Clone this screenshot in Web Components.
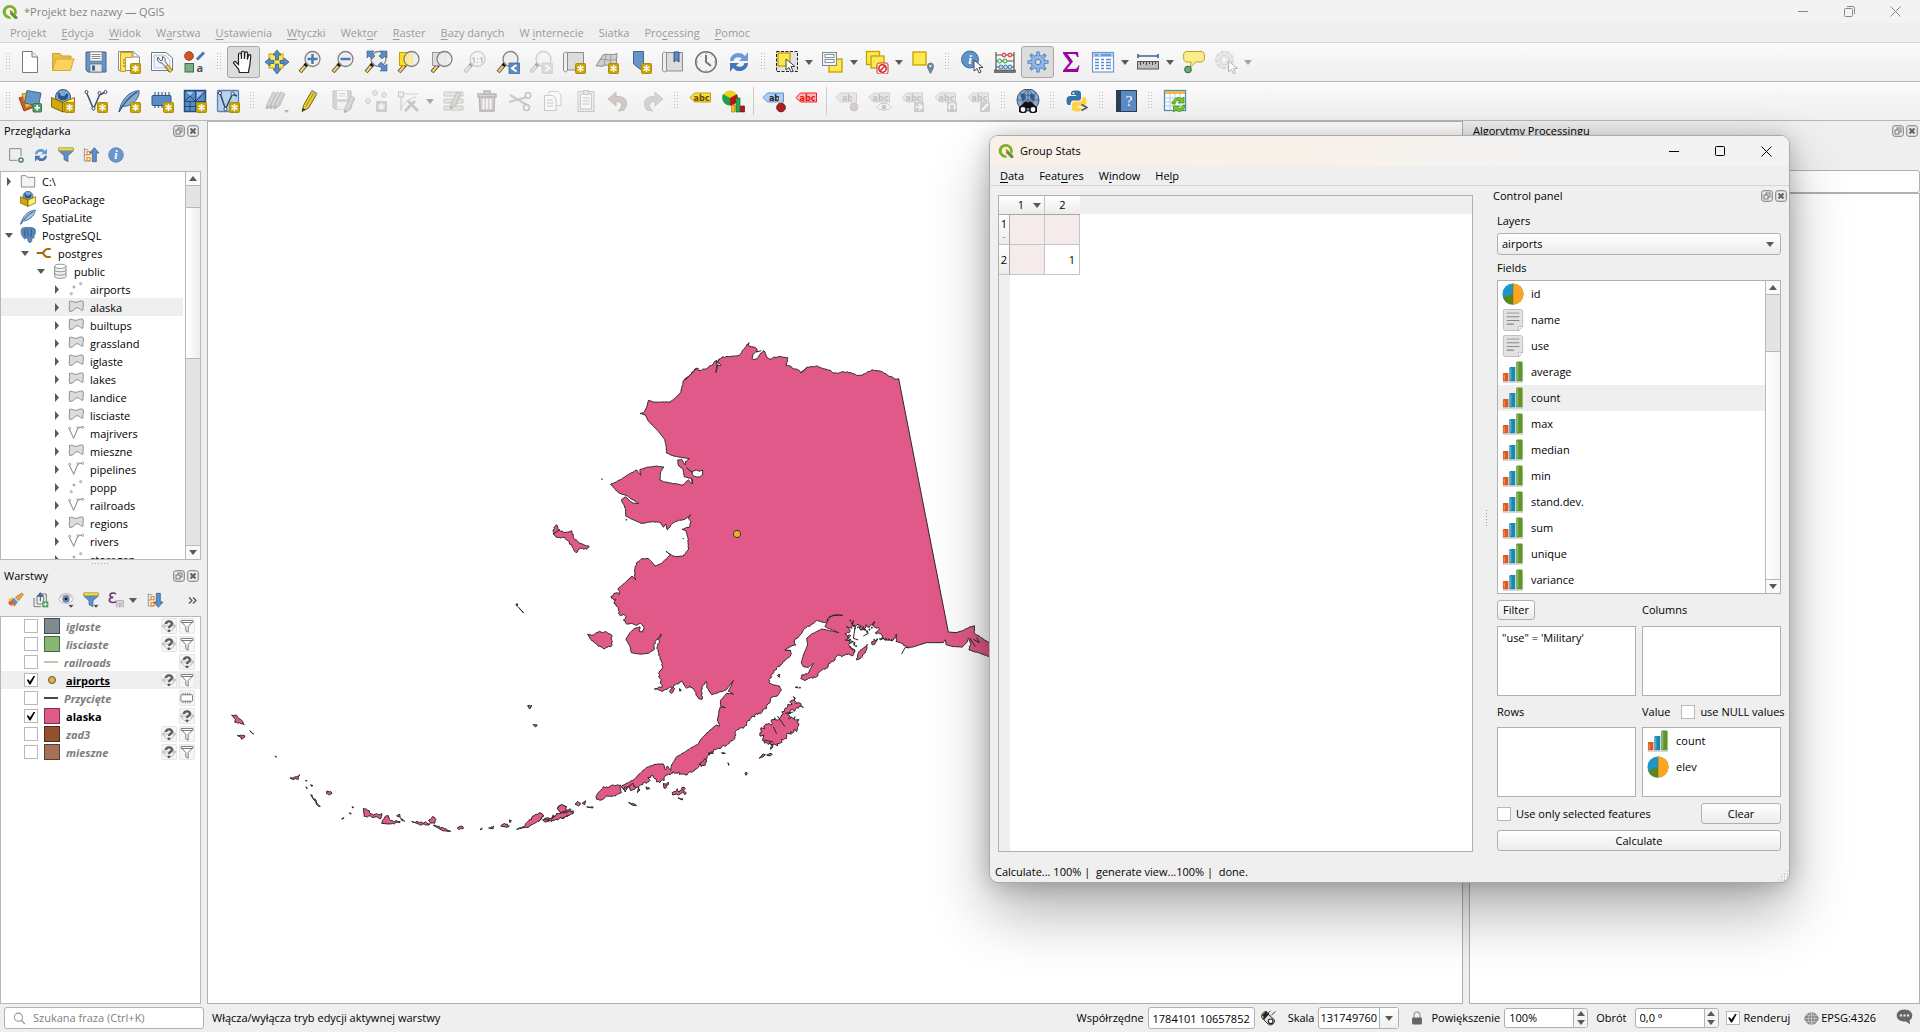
<!DOCTYPE html>
<html lang="pl">
<head>
<meta charset="utf-8">
<title>*Projekt bez nazwy — QGIS</title>
<style>
html, body { margin: 0; height: 100%; }
body { font: 11px/16px "Open Sans", "Noto Sans", sans-serif; color: #000; background: #efefef; overflow: hidden; }
</style>
</head>
<body>
<qgis-app></qgis-app>
<script>
/* ---------- icon drawings, all on a 24 x 24 grid ---------- */
const badge = (x = 13, y = 13) => `<g transform="translate(${x} ${y})"><rect x=".5" y=".5" width="10" height="10" rx="1" fill="#c9a50c" stroke="#b08e00"/><path d="M5.500 2v7M2.500 3.700l6 3.600M8.500 3.700l-6 3.600" stroke="#fff" stroke-width="1.500"/></g>`;
const lens = `<path d="M9 14 2 22" stroke="#555" stroke-width="4"/><path d="M8.500 14.500 2.500 21.500" stroke="#ffd35c" stroke-width="2"/><path d="M9.500 12.500 7 16" stroke="#111" stroke-width="3.500"/>`;
const glass = `<circle cx="14.500" cy="9" r="7.500" fill="#ededed" fill-opacity=".85" stroke="#848484" stroke-width="1.300"/>`;
const label = (f, s, t, x = 'abc') => `<path d="M1 8.500 5.500 4H21.500V13H5.500Z" fill="${f}" stroke="${s}"/><text x="12.500" y="11.500" font-size="8" font-weight="bold" text-anchor="middle" fill="${t}" font-family="DejaVu Sans, sans-serif">${x}</text>`;
const pencil = (x, y, c = '#e3c62a') => `<g transform="translate(${x} ${y})"><path d="M0 17 1 12 7 0 11 2 5.500 14Z" fill="${c}" stroke="#6b5a5a"/><path d="M0 17 .6 14 3 15.500Z" fill="#333"/><path d="M2.500 13 8.500 1" stroke="#fff" stroke-opacity=".5"/></g>`;
const arrows2 = (a, b) => `<path d="M3 11C3 5 9 1.500 15 3.500L18 6 21 2V11H12L15 8.200C11 6 7 7.500 6.500 11Z" fill="${a}"/><path d="M21 13C21 19 15 22.500 9 20.500L6 18 3 22V13H12L9 15.800C13 18 17 16.500 17.500 13Z" fill="${b}"/>`;
const cursor = (x, y) => `<path transform="translate(${x} ${y})" d="M0 0V11L3 8.500 5 13 7 12 5 7.500H9Z" fill="#fff" stroke="#444"/>`;
const sq = (x, y, w, h) => `<rect x="${x}" y="${y}" width="${w}" height="${h}" fill="#fce94f" stroke="#c4a000" stroke-width="1.300"/>`;
const menuTick = `<path d="M15 19H24L19.500 24Z" fill="#444" stroke="#efefef" stroke-width=".8"/>`;
const I = {
 logo: `<path d="M12 1.500A10.300 10.300 0 1 0 14 21.700L11.500 18.200A6.300 6.300 0 1 1 18 13.500L21 16.500A10.300 10.300 0 0 0 12 1.500Z" fill="#7eb02c"/><path d="M12 11.500V15L19.500 22.500H23V19L15.500 11.500Z" fill="#589632"/><path d="M11 8.500 16 11 13 15Z" fill="#ee7913"/>`,
 newfile: `<path d="M4.500 1.500H14L19.500 7V22.500H4.500Z" fill="#fff" stroke="#7a7a7a"/><path d="M14 1.500V7H19.500" fill="#eee" stroke="#7a7a7a"/>`,
 open: `<path d="M1.500 20V3.500H9L11 6H20V9" fill="#e8bd4a" stroke="#cfa02e"/><path d="M1.500 20.500 5 9H23L19.500 20.500Z" fill="#fbd35a" stroke="#d9a92f"/>`,
 save: `<path d="M2 2H22V22H4L2 20Z" fill="#6895c8" stroke="#41658f"/><rect x="6" y="2" width="12" height="9" fill="#fff" stroke="#777" stroke-width=".7"/><path d="M7.500 4.500h9M7.500 6.500h9M7.500 8.500h9" stroke="#888"/><rect x="6" y="14" width="12" height="8" fill="#e4e4e4" stroke="#55708f" stroke-width=".7"/><rect x="8" y="15.500" width="3" height="5" fill="#41658f"/>`,
 layoutnew: `<path d="M1.500 1.500H16L22.500 7V20.500H1.500Z" fill="#fff" stroke="#888"/><path d="M16 1.500V7H22" fill="none" stroke="#888"/><path d="M3.500 2.500H15V7.500H8.500V21.500H3.500Z" fill="#fbe06b" stroke="#c9a012"/><path d="M6 10h2M6 13h2M6 16h2" stroke="#8a6d00"/>${badge()}`,
 layoutmgr: `<path d="M1.500 2.500H16L22.500 8V20.500H1.500Z" fill="#fff" stroke="#777"/><path d="M4 5H15L20 10V18H4Z" fill="#eef5ff" stroke="#a8c5ea"/><path d="M8 7a4 4 0 0 0 4 6l7 9 3-2-7-8.500a4 4 0 0 0-2.500-5V10L11 11 9 9Z" fill="#eee" stroke="#666"/><path d="M15.500 16 20 22.500 22.500 20.500 18 14.500Z" fill="#e8c64a" stroke="#806818" stroke-width=".6"/>`,
 style: `<circle cx="6" cy="6" r="4.300" fill="#d3562b" stroke="#9c3c19"/><path d="M14 9.500 21 2.500" stroke="#4a77b4" stroke-width="3"/><rect x="2" y="13.500" width="8.500" height="8.500" fill="#7cae84" stroke="#3d6f45"/><text x="13.500" y="22" font-size="11" font-weight="bold" fill="#555" font-family="Open Sans, sans-serif">a</text>`,
 hand: `<path d="M7.500 22.500 6.500 19 1.800 13.500C.8 12 2.800 10.800 4 12L6.500 14.500V4.500C6.500 2.500 9 2.500 9.200 4.500L9.500 9V2.500C9.500.8 12.300.8 12.400 2.500V9L13 3C13 1.300 15.600 1.500 15.600 3.200L15.300 9.500 16.500 5.500C17 4 19 4.500 18.800 6.200L18 13.500C18 17 16.500 18.500 16.500 22.500Z" fill="#fff" stroke="#222" stroke-width="1.200"/>`,
 pansel: `<rect x="4" y="4" width="14" height="14" fill="#fce94f" stroke="#c4a000"/><path d="M12 0 16 5H13.500V10H10.500V5H8ZM12 24 16 19H13.500V14H10.500V19H8ZM0 12 5 8V10.500H9V13.500H5V16ZM24 12 19 8V10.500H15V13.500H19V16Z" fill="#5b8bc4" stroke="#345d8d" stroke-width=".8"/>`,
 zin: `${lens}${glass}<path d="M14.500 4V14M9.500 9H19.500" stroke="#4a7ab8" stroke-width="2.500"/>`,
 zout: `${lens}${glass}<path d="M9.500 9H19.500" stroke="#4a7ab8" stroke-width="2.500"/>`,
 zfull: `${lens}${glass}<path d="M3 1H10L8 3 11 6 8 9 5 6 3 8ZM23 1H16L18 3 15 6 18 9 21 6 23 8ZM23 21H16L18 19 14 15 17 12 21 16 23 14Z" fill="#5b8bc4" stroke="#345d8d" stroke-width=".6"/>`,
 zsel: `${lens}<rect x="2.500" y="2.500" width="13" height="13" fill="#fce01a" stroke="#c4a000"/>${glass}<rect x="9" y="4" width="6" height="10" fill="#fbeb84" opacity=".8"/>`,
 zlay: `${lens}<rect x="2.500" y="2.500" width="13" height="13" fill="#ddd" stroke="#999"/>${glass}`,
 z1: `${lens}${glass}<text x="14.500" y="12.500" font-size="9" font-weight="bold" text-anchor="middle" fill="#666" font-family="Open Sans, sans-serif">1:1</text>`,
 zprev: `${lens}${glass}<rect x="13" y="13" width="10.500" height="10.500" fill="#5b8bc4" stroke="#345d8d" stroke-width=".7"/><path d="M20.500 15 16 18.200 20.500 21.500" fill="none" stroke="#fff" stroke-width="2"/>`,
 znext: `${lens}${glass}<rect x="13" y="13" width="10.500" height="10.500" fill="#aaa" stroke="#888" stroke-width=".7"/><path d="M16 15 20.500 18.200 16 21.500" fill="none" stroke="#fff" stroke-width="2"/>`,
 newmap: `<path d="M5 2.500H21.500V20H5Z" fill="#dcdcdc" stroke="#8d8d8d"/><path d="M1.500 4C1.500 1.500 5.500 1.500 5.500 4V20C5.500 22.500 1.500 22.500 1.500 20Z" fill="#eee" stroke="#8d8d8d"/>${badge()}`,
 new3d: `<path d="M1 16 8 5C12 3 15 6 22 3.500L21 17C16 18 12 13 8 16 5 17 3 15 1 16Z" fill="#cfcfcf" stroke="#8a8a8a"/><path d="M5 10C10 8 14 12 21.500 9M11 4.500 9 15.500M16 5 15 15" fill="none" stroke="#8a8a8a" stroke-width=".7"/>${badge()}`,
 bmnew: `<path d="M5.500 1.500H15.500V21L10.500 18 5.500 14Z" fill="#6895c8" stroke="#3e6592"/>${badge()}`,
 bm: `<path d="M5 2.500H21.500V21H5Z" fill="#dcdcdc" stroke="#8d8d8d"/><path d="M1.500 4C1.500 1.500 5.500 1.500 5.500 4V20C5.500 22.500 1.500 22.500 1.500 20Z" fill="#eee" stroke="#8d8d8d"/><path d="M13 2H18V12L15.500 10 13 12Z" fill="#5b8bc4" stroke="#2d5280"/>`,
 clock: `<circle cx="12" cy="12" r="10.300" fill="#f4f4f4" stroke="#777" stroke-width="1.600"/><path d="M12 5V12L17 16" fill="none" stroke="#777" stroke-width="2"/><path d="M12 3v1M12 20v1M3 12h1M20 12h1M5.600 5.600l.7.7M18.400 5.600l-.7.7M5.600 18.400l.7-.7" stroke="#777"/>`,
 refresh: arrows2('#6b9bd6', '#4677b5'),
 select: `<path d="M1.500 1.500H22.500V21.500H1.500Z" fill="#e2e2e2" stroke="#222" stroke-dasharray="3 1.500"/>${sq(3, 3, 12, 13)}${cursor(11, 9)}`,
 selform: `${sq(9, 9, 13, 13)}<rect x="2.500" y="2.500" width="14" height="13" fill="#f3f3f3" stroke="#888"/><rect x="5" y="4.500" width="9" height="3" fill="#fff" stroke="#7c93ad"/><rect x="5" y="9.500" width="9" height="3" fill="#fff" stroke="#7c93ad"/>`,
 desel: `${sq(1.500, 1.500, 13, 13)}${sq(6, 6, 13, 12)}<rect x="12" y="13" width="11" height="11" rx="2" fill="#fff" stroke="#c33"/><circle cx="17.500" cy="18.500" r="3.700" fill="none" stroke="#d22" stroke-width="1.600"/><path d="M15 21 20 16" stroke="#d22" stroke-width="1.600"/>`,
 selloc: `${sq(2, 2, 13, 13)}<path d="M19.500 23.500C17 19 16.500 18 16.500 16a3 3 0 0 1 6 0C22.500 18 22 19 19.500 23.500Z" fill="#6d8aa0" stroke="#4d6b82" stroke-width=".7"/><circle cx="19.500" cy="16" r="1.100" fill="#fff"/>`,
 info: `<circle cx="10" cy="9.500" r="8.500" fill="#5f92c8" stroke="#3f6c9e"/><text x="10" y="14" font-size="13" font-weight="bold" font-style="italic" text-anchor="middle" fill="#fff" font-family="Liberation Serif, serif">i</text>${cursor(14, 10)}`,
 abacus: `<path d="M3 2V21M21 2V21M3 5H21M3 11H21M3 17H21" fill="none" stroke="#555" stroke-width="1.200"/><rect x="1.500" y="20" width="21" height="2.500" fill="#777" stroke="#444" stroke-width=".6"/><g stroke-width="1" fill="#fbb" stroke="#c33"><circle cx="11" cy="5" r="2"/><circle cx="17" cy="5" r="2"/></g><g fill="#cfc" stroke="#3a9a4a"><circle cx="6.500" cy="11" r="2"/><circle cx="12" cy="11" r="2"/></g><g fill="#bde" stroke="#3778a8"><circle cx="8" cy="17" r="2"/><circle cx="12.500" cy="17" r="2"/><circle cx="17" cy="17" r="2"/></g>`,
 gear: `<g stroke="#4d80bf"><path d="M12 1.500V22.500M1.500 12H22.500M4.500 4.500 19.500 19.500M19.500 4.500 4.500 19.500" stroke-width="3.400"/><circle cx="12" cy="12" r="7" fill="#8fb5e2"/><path d="M12 2.500V21.500M2.500 12H21.500M5.500 5.500 18.500 18.500M18.500 5.500 5.500 18.500" stroke="#8fb5e2" stroke-width="1.800"/><circle cx="12" cy="12" r="6" fill="#8fb5e2" stroke="none"/><circle cx="12" cy="12" r="2.700" fill="#dcdcdc"/></g>`,
 sigma: `<path d="M4 2H19L19.500 7H18C17.500 4.500 16.500 4 14 4H8.500L14 11.500 8 19H15C17.500 19 18.500 18 19.500 15.500H20.500L19 22H4V20.500L10.500 12.500 4 3.500Z" fill="#a300a3"/>`,
 table: `<rect x="1.500" y="2.500" width="21" height="19.500" fill="#fff" stroke="#6c99cf" stroke-width="1.200"/><path d="M2 3H22V7H2Z" fill="#a9c8ee"/><path d="M4 5h3M10 5h10M4 9.500h4M10 9.500h3M15 9.500h5M4 12.500h4M10 12.500h3M15 12.500h5M4 15.500h4M10 15.500h3M15 15.500h5M4 18.500h4M10 18.500h3M15 18.500h5" stroke="#5b8ccb" stroke-width="1.300"/>`,
 measure: `<path d="M2 6H22M2 4V8M22 4V8" stroke="#41658f" stroke-width="1.600"/><rect x="1.500" y="11.500" width="21" height="7.500" fill="#bdbdbd" stroke="#555"/><path d="M4.500 12v3M7.500 12v2M10.500 12v3M13.500 12v2M16.500 12v3M19.500 12v2" stroke="#444"/>`,
 tip: `<path d="M5 1.500H19C22 1.500 22.500 4 22.500 6.500S22 12 19 12H13.500L8 18 9 12H5C2 12 1.500 9.500 1.500 6.500S2 1.500 5 1.500Z" fill="#fbed8a" stroke="#bfa01a"/><circle cx="6" cy="19.500" r="3.400" fill="#6fa673" stroke="#3a6a3e"/>`,
 runact: `<circle cx="10.500" cy="10" r="8" fill="#eee" stroke="#aaa" stroke-width="3" stroke-dasharray="4.500 1"/><circle cx="10.500" cy="10" r="5" fill="#ccc" stroke="#888"/><path d="M9 7V13L13 10Z" fill="#fff"/>${cursor(14.500, 11)}`,
 dsm: `<path d="M1 9 10 6 16 18 6 22Z" fill="#d3562b" stroke="#9c3c19"/><path d="M4 5 13 3 17 15 8 19Z" fill="#f0c33a" stroke="#b08b10"/><path d="M9 1.500 23 4 20.500 17 6.500 14Z" fill="#6895c8" stroke="#3e6592"/><rect x="15" y="14.500" width="8.500" height="8.500" rx="1" fill="#5ba06a" stroke="#36714a"/><path d="M19.200 16v5.500M16.500 18.700h5.500" stroke="#fff" stroke-width="1.500"/>`,
 gpkgnew: `<circle cx="12" cy="8" r="7.500" fill="#7fa4cf" stroke="#33557e"/><path d="M7 3C10 4 9 8 12 7 15 8 14 3 17 5 18 9 15 12 12 11 8 12 6 8 7 3Z" fill="#2f5580"/><path d="M.5 8.500 12 13.500V23L.5 18Z" fill="#d3a800" stroke="#665200" stroke-width=".8"/><path d="M23.500 8.500 12 13.500V23L23.500 18Z" fill="#fff06a" stroke="#665200" stroke-width=".8"/>${badge()}`,
 shpnew: `<path d="M2.500 3.500 9.500 20 15.500 6 21.500 3" fill="none" stroke="#3e4f63" stroke-width="1.500"/><g fill="#fff" stroke="#3e4f63"><circle cx="2.500" cy="3" r="1.500"/><circle cx="9.500" cy="19.500" r="1.500"/><circle cx="15.500" cy="4" r="1.500"/><circle cx="21.500" cy="3" r="1.500"/></g>${badge()}`,
 feathernew: `<path d="M2 23C4 12 10 3 22 1.500 23 8 17 17 6 17.500" fill="#86abd6" stroke="#3e6592"/><path d="M2 23C6 15 12 8 20 3" fill="none" stroke="#2d5280" stroke-width="1.200"/>${badge()}`,
 memnew: `<path d="M5 3v16M8.500 3v16M12 3v16M15.500 3v16M19 3v16" stroke="#5a7189" stroke-width="1.300"/><rect x="2" y="6.500" width="19" height="10" rx="1" fill="#5b8bc4" stroke="#2d5280"/>${badge()}`,
 vtnew: `<rect x="1.500" y="1.500" width="21" height="21" fill="#5b8bc4" stroke="#234f80" stroke-width="1.500"/><path d="M12.500 2v20M2 12.500h20M2 17.500h10M7 13v9M2 2 12 12M12 2 2 12M13 12 22 3" fill="none" stroke="#1f4a7a"/><path d="M3 3 7 7 11 3ZM14 3H20L14 9Z" fill="#a7c7ee"/>${badge()}`,
 gpsnew: `<rect x="1.500" y="1.500" width="21" height="21" rx="1" fill="#b9d2ec" stroke="#5b83ad" stroke-width="1.300"/><path d="M4 4 9.500 20 16.500 5 21 7" fill="none" stroke="#2d4a6b" stroke-width="1.500"/><circle cx="4" cy="4" r="1.600" fill="#fff" stroke="#2d4a6b"/><circle cx="9.500" cy="20" r="1.600" fill="#fff" stroke="#2d4a6b"/><circle cx="16.500" cy="4.500" r="1.600" fill="#fff" stroke="#2d4a6b"/>${badge()}`,
 pens: `${pencil(1, 3, '#a07070')}${pencil(5, 3, '#a07070')}${pencil(9, 3, '#a07070')}<path d="M19 21h5l-2.500 3Z" fill="#333"/>`,
 pen: `<g transform="translate(4 .5)"><path d="M0 22 1.500 16 10 1 15 4 6.500 18.500Z" fill="#e6cf2e" stroke="#6b5f1a"/><path d="M3.800 17 12.500 2.500" stroke="#a8901a"/><path d="M0 22 .8 18.500 3.500 20Z" fill="#333"/><path d="M10 1 15 4 14 6 9 3Z" fill="#b9b08b"/></g>`,
 savee: `<path d="M2 2H20V20H4L2 18Z" fill="#999" stroke="#666"/><rect x="6" y="2" width="10" height="8" fill="#fff"/><path d="M7.500 4.500h7M7.500 7h7" stroke="#888"/><rect x="6" y="13" width="10" height="7" fill="#eee"/>${pencil(13, 7, '#b88080')}`,
 pts: `<g fill="#ccc" stroke="#888"><circle cx="4" cy="12" r="2.500"/><circle cx="11" cy="4" r="2.500"/><circle cx="20" cy="6" r="2.500"/></g><g transform="translate(12 12)"><rect width="11" height="11" rx="1" fill="#888"/><path d="M5.500 2v7M2.500 3.700l6 3.600M8.500 3.700l-6 3.600" stroke="#fff" stroke-width="1.500"/></g>`,
 vert: `<path d="M5 22V5H22" fill="none" stroke="#888" stroke-width="1.200"/><rect x="2.500" y="3" width="5" height="5" fill="#ddd" stroke="#777"/><path d="M5 20C8 14 11 10 20 8" fill="none" stroke="#888"/><path d="M9 22 19 12M12 12 22 22" stroke="#777" stroke-width="3"/>`,
 attr: `<path d="M2 3h19v4H2ZM2 10h19v4H2ZM2 17h19v4H2Z" fill="#d0cb98" stroke="#777"/>${pencil(8, 3, '#b88080')}`,
 trash: `<path d="M3 5H21V8H3ZM9 5V2H15V5M4.500 8 5 22H19L19.500 8Z" fill="#b88" stroke="#633" stroke-width="1.500"/><path d="M8.500 10V20M12 10V20M15.500 10V20" stroke="#fff" stroke-width="1.600"/>`,
 cut: `<path d="M2 6 19 16M1 13 19 8" stroke="#777" stroke-width="2.200"/><circle cx="20" cy="6.500" r="2.700" fill="none" stroke="#666" stroke-width="1.500"/><circle cx="18.500" cy="18.500" r="3" fill="none" stroke="#666" stroke-width="1.500"/>`,
 copy: `<path d="M8 2.500H17L20 6V16.500H8Z" fill="#fff" stroke="#888"/><path d="M3.500 6.500H12L15 10V21.500H3.500Z" fill="#fff" stroke="#777"/><path d="M6 11h6M6 14h6M6 17h6" stroke="#777"/>`,
 paste: `<rect x="4" y="2.500" width="16" height="20" fill="#ddd" stroke="#777"/><rect x="6.500" y="5" width="11" height="15" fill="#fff" stroke="#777"/><path d="M9 1.500h6v4H9Z" fill="#bbb" stroke="#777"/><path d="M8.500 9h7M8.500 12h7M8.500 15h7" stroke="#777"/>`,
 undo: `<path d="M1 10 9 3V7.500C20 7 22 14 17 21L11 22C17 17 15 12.500 9 12.500V17Z" fill="#a9705a" stroke="#83513e"/>`,
 redo: `<path d="M23 10 15 3V7.500C4 7 2 14 7 21L13 22C7 17 9 12.500 15 12.500V17Z" fill="#8b9a8b" stroke="#6b7a6b"/>`,
 abc: label('#f6dc3c', '#bfa10a', '#5a4a00'),
 diag: `<circle cx="8" cy="9" r="7.500" fill="#e9d31a"/><path d="M8 9 1 5A8 8 0 0 0 8 16.500Z" fill="#1fa04c"/><path d="M8 9 15 5A8 8 0 0 1 8 16.500Z" fill="#b5151b"/><path d="M9.500 16h3.500v7H9.500Z" fill="#f3c80c" stroke="#946c00" stroke-width=".6"/><path d="M14 9h4v14h-4Z" fill="#2aa851" stroke="#0b5e25" stroke-width=".6"/><path d="M18.500 17h4v6h-4Z" fill="#b5151b" stroke="#600" stroke-width=".6"/>`,
 abpin: label('#a9cdf5', '#5b95d6', '#223', 'ab') + `<path d="M18 8V16" stroke="#ccc" stroke-width="2.500"/><circle cx="19" cy="18.500" r="4.300" fill="#ae1e20" stroke="#7a0d10"/>`,
 abcred: label('#ffb8b8', '#f21d1d', '#e01010'),
 lpin: label('#d2cda0', '#888', '#555', 'ab') + `<path d="M18 8V16" stroke="#ccc" stroke-width="2.500"/><circle cx="19" cy="18" r="4" fill="#b77" stroke="#966"/>`,
 leye: label('#d2cda0', '#888', '#555') + `<path d="M9 18C12 13 20 13 23 18 20 22 12 22 9 18Z" fill="#fff" stroke="#777"/><circle cx="16" cy="18" r="2.500" fill="#777"/>`,
 lmov: label('#d2cda0', '#888', '#555') + `<rect x="13" y="13" width="10" height="10" fill="#888"/><path d="M14.500 18h6M18 15l3 3-3 3" fill="none" stroke="#fff" stroke-width="1.600"/>`,
 lrot: label('#d2cda0', '#888', '#555') + `<rect x="13" y="13" width="10" height="10" fill="#888"/><path d="M16 20a3 3 0 1 1 4 0" fill="none" stroke="#fff" stroke-width="1.600"/>`,
 ledit: label('#d2cda0', '#888', '#555') + `<rect x="13" y="13" width="10" height="10" fill="#888"/><path d="M15 21 21 15" stroke="#fff" stroke-width="2"/>`,
 metas: `<circle cx="12" cy="11" r="11" fill="#89abd3" stroke="#3c5674"/><path d="M12 0V22M1 11H23M4 4C9 7 15 7 20 4M4 18C9 15 15 15 20 18M12 0C5 6 5 16 12 22M12 0C19 6 19 16 12 22" fill="none" stroke="#3c5674" stroke-width=".8"/><path d="M4 6 8 4 10 9 7 12ZM14 5 19 6 18 12 14 9Z" fill="#35587f"/><path d="M3 19 9 12.500H11L12 14 13 12.500H15L21 19V23H14V19H10V23H3Z" fill="#111"/><circle cx="7" cy="20.500" r="3.200" fill="#fff" stroke="#111" stroke-width="1.500"/><circle cx="17" cy="20.500" r="3.200" fill="#fff" stroke="#111" stroke-width="1.500"/>`,
 python: `<path d="M10.500 1.500C14 1.500 16 2 16 4.500V9C16 11 15 11.500 13 11.500H8.500C6.500 11.500 5.500 13 5.500 16H4C2 16 1.500 14 1.500 11.500S2.500 7 5 7H11V6H6V4C6 2 8 1.500 10.500 1.500Z" fill="#3672a6"/><path d="M12 22.500C8.500 22.500 7 21.500 7 19.500V15.500C7 13.500 8 12.500 10 12.500H14.500C16.500 12.500 17.500 11 17.500 8H19C21 8 21.500 10 21.500 12.500S20.500 17 18 17H12V18.500H16.500V20C16.500 22 14.500 22.500 12 22.500Z" fill="#ffd342"/><circle cx="8.500" cy="4.200" r="1" fill="#fff"/><path d="M16.500 15.500 22 18.500 16.500 21.500" fill="none" stroke="#555" stroke-width="1.500"/>`,
 help: `<rect x="2.500" y="1.500" width="20" height="21" fill="#5b8bc4" stroke="#2c3e50"/><rect x="2.500" y="1.500" width="4.500" height="21" fill="#2c3e50"/><text x="15" y="17" font-size="15" text-anchor="middle" fill="#fff" font-family="Liberation Serif, serif">?</text>`,
 reload: `<rect x="1.500" y="1.500" width="21" height="20" fill="#fff" stroke="#4a90b8" stroke-width="1.300"/><path d="M2 2H22V5H2Z" fill="#f4b54a"/><path d="M2 9h20M2 13h20M2 17h20M7 5v16M12 5v16M17 5v16" stroke="#a9cbe0"/><path d="M9 15C10 9 16 7 19 10L21 8V14H15L17 12C14 10.500 12 12 12 15ZM22.500 16C21.500 22 16 24 13 21L10.500 23V17H16.500L14.500 19C17 20.500 19 19 19.500 16Z" fill="#7bc528" stroke="#3f8a0c" stroke-width=".7"/>`,
 addsel: `<path d="M2.500 2.500H19.500V20H2.500Z" fill="none" stroke="#888" stroke-width="1.500"/><circle cx="19.500" cy="19.500" r="5.500" fill="#efefef"/><circle cx="19.500" cy="19.500" r="3" fill="#fff" stroke="#4e8c5a" stroke-width="2.500"/>`,
 filter: `<path d="M1 1.500H23V6L15 13V22L9 19V13L1 6Z" fill="#5f8fc8" stroke="#3e6592"/><path d="M1 1.500H23V5H1Z" fill="#fbe23c" stroke="#c9aa12"/>`,
 collapse: `<path d="M2 2V21H11M2 4H8M2 12H6" fill="none" stroke="#999" stroke-width="1.500"/><rect x="6" y="7" width="4.500" height="4.500" fill="#fff" stroke="#f08a1a" stroke-width="1.800"/><rect x="6" y="16" width="4.500" height="4.500" fill="#fff" stroke="#f08a1a" stroke-width="1.800"/><path d="M17 1 24 9H20V22H14V9H10Z" fill="#5f8fc8" stroke="#2f4d70"/>`,
 expand: `<path d="M2 2V21H11M2 4H8M2 12H6" fill="none" stroke="#999" stroke-width="1.500"/><rect x="6" y="7" width="4.500" height="4.500" fill="#fff" stroke="#f08a1a" stroke-width="1.800"/><rect x="6" y="16" width="4.500" height="4.500" fill="#fff" stroke="#f08a1a" stroke-width="1.800"/><path d="M17 23 24 15H20V2H14V15H10Z" fill="#5f8fc8" stroke="#2f4d70"/>`,
 infos: `<circle cx="12" cy="12" r="11" fill="#6a98cc" stroke="#4a78ac"/><text x="12" y="18" font-size="18" font-weight="bold" font-style="italic" text-anchor="middle" fill="#fff" font-family="Liberation Serif, serif">i</text>`,
 brush: `<path d="M1 10 8 8 14 16 9 22 1 18Z" fill="#f4c542"/><path d="M1 14 7 15 6 21 1 18Z" fill="#e94f37"/><path d="M9 9 15 15 10 21C9 18 7 15 5 12Z" fill="#4f9ad6"/><path d="M4 14C7 14 9 16 10 20" stroke="#e94f37" stroke-width="2.500" fill="none"/><path d="M11 8 16 13 23 3.500 20.500 1.500Z" fill="#e0a850" stroke="#a87010"/>`,
 addgrp: `<path d="M6 6H16V18H6Z" fill="#eee" stroke="#777" stroke-width="1.500"/><path d="M1.500 9V22H12M10 3H20V14" fill="none" stroke="#777" stroke-width="1.500"/><path d="M11 1 15 6H7ZM11 5V14" stroke="#2d5280" stroke-width="1.500" fill="#5b8bc4"/><rect x="14" y="14" width="9" height="9" fill="#4e9a5a"/><path d="M18.500 15.500v6M15.500 18.500h6" stroke="#fff" stroke-width="1.500"/>`,
 eye: `<path d="M1 11C5 3 18 2 23 11 18 19 6 19 1 11Z" fill="#f7f7f7" stroke="#aaa" stroke-width="1.300"/><path d="M2 7C7 1 17 1 22 7" fill="none" stroke="#aaa" stroke-width="1.300"/><circle cx="12" cy="10.500" r="5" fill="#5f8fc8" stroke="#567"/><circle cx="12" cy="10.500" r="2" fill="#111"/>${menuTick}`,
 filterm: `<path d="M1 1.500H23V6L15 13V22L9 19V13L1 6Z" fill="#5f8fc8" stroke="#3e6592"/><path d="M1 1.500H23V5H1Z" fill="#fbe23c" stroke="#c9aa12"/>${menuTick}`,
 eps: `<path d="M12 3C8 0 3 2 3 5 3 7.500 6 8 8 8 4 8 2 10 2 12.500 2 16 9 17 13 14" fill="none" stroke="#6b3d78" stroke-width="2.500"/><path d="M13 23V13H23V23M17 23V17H19.500V23" fill="#ddd" stroke="#aaa" stroke-width="1.500"/>`,
 folder: `<path d="M2 21V4H9L11 6.500H22V21Z" fill="#f4f4f4" stroke="#888" stroke-width="1.400"/>`,
 gpkg: `<circle cx="12" cy="8" r="7.500" fill="#7fa4cf" stroke="#33557e"/><path d="M7 3C10 4 9 8 12 7 15 8 14 3 17 5 18 9 15 12 12 11 8 12 6 8 7 3Z" fill="#2f5580"/><path d="M.5 8.500 12 13.500V23L.5 18Z" fill="#d3a800" stroke="#665200"/><path d="M23.500 8.500 12 13.500V23L23.500 18Z" fill="#fff06a" stroke="#665200"/>`,
 feather: `<path d="M1 23C4 11 11 3 23 1.500 22 8 17 16 6 18" fill="#a8c4e6" stroke="#3e6592" stroke-width="1.300"/><path d="M1 23C6 15 12 8 20 4" fill="none" stroke="#2d5280" stroke-width="1.500"/>`,
 pg: `<path d="M3 2C7 0 17 0 21 2 25 4 23 12 20 15L22 16 18 17C18 22 17 24 13.500 23 11.500 22 12 18 11 16L7 18C2 14 0 6 3 2Z" fill="#5a88b8" stroke="#3b6690"/><path d="M8 3C6 7 8 11 7 15M16 3C19 6 17 11 16 15M12 14C13 11 10 8 12 4" fill="none" stroke="#2f567e" stroke-width="1.300"/>`,
 conn: `<path d="M1 12H10M22 6H17C13 6 13 9 10 12 13 15 13 18 17 18H22" fill="none" stroke="#a8660a" stroke-width="3"/>`,
 db: `<path d="M4 5V20C4 24 21 24 21 20V5" fill="#f2f2f2" stroke="#888" stroke-width="1.400"/><ellipse cx="12.500" cy="5" rx="8.500" ry="3.200" fill="#fff" stroke="#888" stroke-width="1.400"/><path d="M4 10.500C4 14 21 14 21 10.500M4 15.500C4 19 21 19 21 15.500" fill="none" stroke="#888" stroke-width="1.400"/>`,
 point: `<g fill="#fff" stroke="#888" stroke-width="1.300"><circle cx="5" cy="19" r="1.500"/><circle cx="9" cy="9" r="1.500"/><circle cx="19" cy="4" r="1.500"/></g>`,
 poly: `<path d="M2 4C5 1.500 8 5.500 12 5 16 4.500 19 1.500 22.500 3.500 24 7 22 11 22.500 16.500 20 18.500 18 13.500 14 13 10 13 9 18.500 3 19 0 15 3.500 9 2 4Z" fill="#dcdcdc" stroke="#808080" stroke-width="1.300"/>`,
 line: `<path d="M2 6 8.500 20 15 4 23 3" fill="none" stroke="#777" stroke-width="1.400"/><g fill="#fff" stroke="#777"><circle cx="2.500" cy="5" r="1.600"/><circle cx="15" cy="4" r="1.600"/><circle cx="22" cy="3.500" r="1.600"/></g>`,
 nocrs: `<circle cx="12" cy="12" r="9" fill="#eee" stroke="#bbb" stroke-width="1.500"/><path d="M0 12 5 8M24 12 19 8M0 12 5 16M24 12 19 16M2 12H22" stroke="#bbb" stroke-width="1.500"/><path d="M7 8.500C7 2.500 17 2.500 17 8.500 17 12 12 11.500 12 15.500" fill="none" stroke="#5c5c5c" stroke-width="4"/><circle cx="12" cy="20.300" r="2.500" fill="#5c5c5c"/>`,
 funnel: `<path d="M2 2.500H22V6H2ZM3.500 6 10 13V20.500L14 22.500V13L20.500 6" fill="#fff" stroke="#777" stroke-width="1.700"/>`,
 chip: `<path d="M5 3v18M9 3v18M13 3v18M17 3v18" stroke="#777" stroke-width="1.500"/><rect x="1.500" y="6.500" width="20" height="11" rx="1" fill="#fff" stroke="#777" stroke-width="1.700"/>`,
 float: `<rect x="1.500" y="1.500" width="21" height="21" rx="4" fill="#eee" stroke="#777" stroke-width="2"/><rect x="10" y="6" width="8" height="8" fill="none" stroke="#777" stroke-width="2"/><rect x="6" y="10" width="8" height="8" fill="#eee" stroke="#777" stroke-width="2"/>`,
 close: `<rect x="1.500" y="1.500" width="21" height="21" rx="4" fill="#eee" stroke="#777" stroke-width="2"/><path d="M7 7 17 17M17 7 7 17" stroke="#666" stroke-width="4.500"/>`,
 search: `<circle cx="10" cy="9.500" r="7.500" fill="none" stroke="#999" stroke-width="2"/><path d="M15 15 22 22" stroke="#999" stroke-width="2.500"/>`,
 mouse: `<path d="M4 5C8 0 13 3 13 7L22 15C22 22 15 24 12 21L3 12C2 9 2 7 4 5Z" fill="#ddd" stroke="#333" stroke-width="1.500"/><path d="M4 9 10 3M6 12 13 5M9 4 6 14" stroke="#222" stroke-width="3"/><circle cx="16" cy="17" r="3.500" fill="#fff" stroke="#222" stroke-width="1.800"/><path d="M17 8 23 2M13 4 16 1" stroke="#333" stroke-width="1.500"/>`,
 lock: `<path d="M7 12V7C7 0 17 0 17 7V12" fill="none" stroke="#aaa" stroke-width="2.500"/><rect x="3.500" y="11" width="17" height="12" rx="2" fill="#666"/>`,
 globe: `<path d="M12 2C19 2 22 8 24 12 22 16 19 22 12 22 5 22 2 16 0 12 2 8 5 2 12 2Z" fill="#888"/><path d="M12 2V22M1 12H23M3 7H21M3 17H21M12 2C5 8 5 16 12 22M12 2C19 8 19 16 12 22" fill="none" stroke="#ddd" stroke-width=".9"/>`,
 bubble: `<path d="M12 2C19 2 23 6 23 10.500 23 14 21 16.500 19 17.500L20 23 14 19C6 19.500 1 16 1 10.500 1 6 5 2 12 2Z" fill="#666"/><path d="M5.500 9h3v3h-3ZM10.500 9h3v3h-3ZM15.500 9h3v3h-3Z" fill="#eee"/>`,
 pie: `<circle cx="12" cy="12" r="11.500" fill="#1d96cc"/><path d="M12 .5A11.500 11.500 0 0 1 12 23.500Z" fill="#faa61e"/><path d="M12 12V23.500A11.500 11.500 0 0 1 1.300 16.300Z" fill="#568a1c"/><path d="M12 .5V23.500M12 12 1.300 16.300" stroke="#7b6a30" stroke-width=".6"/>`,
 doc: `<path d="M1.500 2Q1.500 .5 3 .5H20Q22.500 .5 22.500 3V19L19 23.500H4Q1.500 23.500 1.500 21Z" fill="#e2e2e2" stroke="#bbb"/><path d="M5 4.500H19" stroke="#bbb" stroke-width="2"/><path d="M5 8.500H19M5 12.500H19M5 16.500H13" stroke="#888" stroke-width="1.200"/><path d="M18 23V19H22" fill="#fff" stroke="#bbb"/>`,
 bars: `<path d="M1 23H23" stroke="#ccc" stroke-width="1.500"/><path d="M1 14Q1 13 2 13H7V22H1Z" fill="#e2571a"/><path d="M8 8Q8 6.500 9.500 6.500H14.500V22H8Z" fill="#1987b4"/><path d="M15.500 2Q15.500 .5 17 .5H21Q22.500 .5 22.500 2V22H15.500Z" fill="#5f962b"/><path d="M17 2V21M9.500 8V21M2.500 15V21" stroke="#fff" stroke-opacity=".3" stroke-width="1.500"/>`,
};

/* ---------- base element ---------- */
class El extends HTMLElement {
  connectedCallback() {
    if (this.shadowRoot) return;
    const t = document.createElement('template');
    t.innerHTML = this.render();
    this.attachShadow({ mode: 'open' }).append(t.content.cloneNode(true));
  }
  a(n, d = '') { return this.getAttribute(n) ?? d; }
}
const def = (n, c) => customElements.define(n, c);

const controls = `
button, input, select, textarea { font: inherit; color: inherit; margin: 0; box-sizing: border-box; outline: 0; }
.btn { border: 1px solid #b0b0b0; border-radius: 3px; background: linear-gradient(#fff, #ececec); padding: 0; }
.plain { border: 0; background: none; padding: 0; }
input[type=checkbox] { appearance: none; flex: none; width: 14px; height: 14px; border: 1px solid #b8b8b8; background: #fff; display: grid; place-items: center; }
input[type=checkbox]:checked::before { content: ""; width: 9px; height: 9px; background: #000; clip-path: polygon(0 45%, 22% 45%, 38% 68%, 82% 0, 100% 0, 45% 100%, 32% 100%); }
.field { border: 1px solid #b0b0b0; border-radius: 3px; background: #fff; }
label { white-space: nowrap; }`;

def('q-icon', class extends El {
  render() {
    const s = this.a('size', '24');
    return `<style>:host{display:inline-block;flex:none;width:${s}px;height:${s}px}:host([off]){opacity:.34;filter:grayscale(.6)}svg{display:block}</style>
    <svg width="${s}" height="${s}" viewBox="0 0 24 24" fill="none" aria-hidden="true">${I[this.a('name')]}</svg>`;
  }
});

def('q-caret', class extends El {
  render() {
    const d = { down: 'M1 2H9L5 7Z', up: 'M1 7H9L5 2Z', right: 'M3 0V9L7 4.500Z' }[this.a('dir', 'down')];
    return `<style>:host{display:inline-flex;flex:none}:host([off]){opacity:.5}</style><svg width="10" height="9" viewBox="0 0 10 9" aria-hidden="true"><path d="${d}" fill="#5a5a5a"/></svg>`;
  }
});

/* ---------- main window: title, menus, toolbars ---------- */
def('title-bar', class extends El {
  render() {
    return `<style>:host{display:flex;align-items:center;height:23px;padding:0 2px;background:#f3f3f3;color:#858585}
    span{flex:1;padding-left:6px}button{border:0;background:none;width:46px;height:22px;padding:0;display:grid;place-items:center}</style>
    <q-icon name="logo" size="16"></q-icon><span>*Projekt bez nazwy — QGIS</span>
    <button aria-label="Minimalizuj"><svg width="11" height="11"><path d="M0 5.500H10" stroke="#888"/></svg></button>
    <button aria-label="Przywróć"><svg width="11" height="11" fill="none" stroke="#888"><rect x=".5" y="2.500" width="8" height="8" rx="1"/><path d="M3 .5H9Q10.500 .5 10.500 2V8"/></svg></button>
    <button aria-label="Zamknij"><svg width="11" height="11"><path d="M.5.5 10.500 10.500M10.500.5.5 10.500" stroke="#888"/></svg></button>`;
  }
});

def('menu-bar', class extends El {
  render() {
    const items = this.a('items').split('|').map(s => `<button>${s.replace(/_(.)/, '<u>$1</u>')}</button>`).join('');
    return `<style>:host{display:flex;height:19px;gap:15px;padding-left:10px;border-bottom:1px solid #d6d6d6;background:#efefef}
    button{font:inherit;color:inherit;border:0;background:none;padding:0;white-space:nowrap}u{text-underline-offset:2px}</style>${items}`;
  }
});

def('tool-bar', class extends El {
  render() {
    const parts = this.a('items').split(' ').map(s => {
      if (s === '#') return '<i class="handle"></i>';
      if (s === '|') return '<b class="sep"></b>';
      const off = s.includes('-') ? 'off' : '', name = s.replace(/[-+!]/g, '');
      return `<button aria-label="${name}" class="${s.includes('!') ? 'on' : ''} ${s.includes('+') ? 'drop' : ''}"><q-icon name="${name}" ${off}></q-icon>${s.includes('+') ? `<q-caret ${off}></q-caret>` : ''}</button>`;
    }).join('');
    return `<style>:host{display:flex;align-items:center;height:38px;border-bottom:1px solid #b8b8b8;background:linear-gradient(#fafafa,#efefef)}
    button{box-sizing:border-box;width:33px;height:32px;border:0;border-radius:3px;background:none;padding:0;display:flex;align-items:center;justify-content:center;flex:none}
    .drop{width:45px;justify-content:flex-start;padding-left:4px;gap:5px}.on{background:#dcdcdc;border:1px solid #a6a6a6}
    .handle{width:16px;height:18px;flex:none;background:repeating-linear-gradient(#bbb 0 1px,transparent 1px 3px) 6px 0/1px 18px no-repeat,repeating-linear-gradient(#bbb 0 1px,transparent 1px 3px) 9px 0/1px 18px no-repeat}
    .handle:first-of-type{width:13px}.sep{width:1px;height:28px;margin:0 3px;background:#ccc}</style>${parts}`;
  }
});

/* ---------- docks ---------- */
def('dock-title', class extends El {
  render() {
    return `<style>${controls}:host{display:flex;align-items:center;height:20px;padding:0 2px 0 4px;gap:2px;flex:none}span{flex:1;white-space:nowrap}button{display:flex}</style>
    <span><slot></slot></span><button class="plain" aria-label="Odepnij"><q-icon name="float" size="12"></q-icon></button><button class="plain" aria-label="Zamknij panel"><q-icon name="close" size="12"></q-icon></button>`;
  }
});

def('scroll-bar', class extends El {
  render() {
    return `<style>:host{display:flex;flex-direction:column;width:14px;flex:none;border-left:1px solid #b8b8b8;background:var(--track,#e4e4e4)}
    button{box-sizing:border-box;height:14px;flex:none;border:0 solid #b8b8b8;padding:0;background:#fafafa;display:grid;place-items:center}button:first-of-type{border-bottom-width:1px}button:last-of-type{border-top-width:1px}
    .before{height:var(--start,0);flex:none}.thumb{box-sizing:border-box;height:var(--len);flex:none;border:solid #b8b8b8;border-width:var(--edge,1px) 0 1px;background:var(--thumb,linear-gradient(90deg,#fff,#eee))}.rest{flex:1}</style>
    <button aria-label="W górę"><q-caret dir="up"></q-caret></button><div class="before"></div><div class="thumb"></div><div class="rest"></div><button aria-label="W dół"><q-caret></q-caret></button>`;
  }
});

def('tree-row', class extends El {
  render() {
    const c = this.a('caret');
    return `<style>:host{display:flex;align-items:center;height:18px;line-height:20px;padding-left:calc(var(--lv) * 16px);white-space:nowrap;flex:none}:host([sel]){background:#efefef;margin-right:2px}
    i{width:16px;display:flex;justify-content:center;margin-right:3px;flex:none}q-icon{margin-right:6px}span{height:18px}</style>
    <i>${c ? `<q-caret dir="${c}"></q-caret>` : ''}</i><q-icon name="${this.a('icon')}" size="16"></q-icon><span><slot></slot></span>`;
  }
});

def('browser-panel', class extends El {
  render() {
    const base = [[0, 'right', 'folder', 'C:\\'], [0, '', 'gpkg', 'GeoPackage'], [0, '', 'feather', 'SpatiaLite'], [0, 'down', 'pg', 'PostgreSQL'], [1, 'down', 'conn', 'postgres'], [2, 'down', 'db', 'public']];
    const tabs = 'airports.point alaska.poly builtups.poly grassland.poly iglaste.poly lakes.poly landice.poly lisciaste.poly majrivers.line mieszne.poly pipelines.line popp.point railroads.line regions.poly rivers.line storagen.point'.split(' ').map(t => { const [n, k] = t.split('.'); return [3, 'right', k, n]; });
    const rows = [...base, ...tabs].map(([l, c, i, n]) => `<tree-row style="--lv:${l}" caret="${c}" icon="${i}" ${n === 'alaska' ? 'sel' : ''}>${n}</tree-row>`).join('');
    return `<style>${controls}:host{display:flex;flex-direction:column;height:439px;flex:none}
    .tools{display:flex;align-items:center;height:30px;padding:0 0 2px 8px;gap:9px;flex:none;box-sizing:border-box}.tools button{display:flex}
    .list{display:flex;flex:1;min-height:0;border:1px solid #b8b8b8;background:#fff}.rows{flex:1;min-width:0;overflow:hidden;display:flex;flex-direction:column}
    scroll-bar{--start:21px;--len:152px}</style>
    <dock-title>Przeglądarka</dock-title>
    <div class="tools">${['addsel', 'refresh', 'filter', 'collapse', 'infos'].map(n => `<button class="plain" aria-label="${n}"><q-icon name="${n}" size="16"></q-icon></button>`).join('')}</div>
    <div class="list"><div class="rows">${rows}</div><scroll-bar></scroll-bar></div>`;
  }
});

def('layer-row', class extends El {
  render() {
    const on = this.hasAttribute('on'), k = this.a('kind', 'fill'), c = this.a('color'), n = this.a('name');
    const sw = k === 'fill' ? `<b class="sw"></b>` : k === 'line' ? `<b class="ln"></b>` : `<b class="pt"></b>`;
    return `<style>${controls}:host{display:flex;align-items:center;height:18px;padding:0 5px 0 23px;box-sizing:border-box;font-weight:bold}:host([sel]){background:#efefef}
    label{flex:1;display:flex;align-items:center;gap:6px;color:#7d7d7d;font-style:italic}:host([on]) label{color:#000;font-style:normal}:host([sel]) span{text-decoration:underline}span{line-height:20px;height:18px}
    .sw{width:14px;height:14px;border:1px solid rgba(0,0,0,.45);background:${c}}.ln{width:14px;height:2px;background:${c}}.pt{width:6px;height:6px;margin:0 4px;border:1px solid #555;border-radius:50%;background:${c}}
    .ind{width:16px;height:16px;display:grid;place-items:center;background:#f6f6f6;border-radius:2px;margin-left:2px;box-shadow:inset 0 0 0 1px #e6e6e6}</style>
    <label><input type="checkbox" ${on ? 'checked' : ''}>${sw}<span>${n}</span></label>
    ${this.a('marks').split(' ').map(m => `<div class="ind"><q-icon name="${m}" size="14"></q-icon></div>`).join('')}`;
  }
});

def('layers-panel', class extends El {
  render() {
    const L = [['iglaste', '#7f8c8f', 'fill', 'nocrs funnel'], ['lisciaste', '#86b772', 'fill', 'nocrs funnel'], ['railroads', '#ccc2ac', 'line', 'nocrs'], ['airports', '#e8b02f', 'pt', 'nocrs funnel', 'on sel'], ['Przycięte', '#52434b', 'line', 'chip'], ['alaska', '#e15989', 'fill', 'nocrs', 'on'], ['zad3', '#91522d', 'fill', 'nocrs funnel'], ['mieszne', '#a47158', 'fill', 'nocrs funnel']];
    return `<style>${controls}:host{display:flex;flex-direction:column;flex:1;min-height:0}
    .tools{display:flex;align-items:center;height:30px;padding:0 4px 2px 8px;gap:9px;flex:none;box-sizing:border-box}.tools button{display:flex;align-items:center;gap:4px}.tools .more{margin-left:auto}
    .list{flex:1;border:1px solid #b8b8b8;background:#fff}</style>
    <dock-title>Warstwy</dock-title>
    <div class="tools">${['brush', 'addgrp', 'eye', 'filterm'].map(n => `<button class="plain" aria-label="${n}"><q-icon name="${n}" size="16"></q-icon></button>`).join('')}<button class="plain" aria-label="wyrażenie"><q-icon name="eps" size="16"></q-icon><q-caret></q-caret></button><button class="plain" aria-label="rozwiń"><q-icon name="expand" size="16"></q-icon></button><button class="plain more" aria-label="więcej"><svg width="9" height="7"><path d="M1 .5 4 3.500 1 6.500M5 .5 8 3.500 5 6.500" fill="none" stroke="#555" stroke-width="1.300"/></svg></button></div>
    <div class="list">${L.map(r => `<layer-row name="${r[0]}" color="${r[1]}" kind="${r[2]}" marks="${r[3]}" ${r[4] || ''}></layer-row>`).join('')}</div>`;
  }
});

/* ---------- map ---------- */
def('map-canvas', class extends El {
  render() {
    let seed = 7;
    const rnd = () => (seed = (seed * 16807) % 2147483647) / 2147483647 - .5;
    /* breaks each side of a coarse outline into short steps pushed off the line by up to amp / 2 */
    const rough = (s, amp) => {
      const n = s.trim().split(/[\s,]+/).map(Number), out = [];
      for (let i = 0; i < n.length; i += 2) {
        const x = n[i], y = n[i + 1];
        out.push(`${x},${y}`);
        if (i + 3 < n.length && amp) {
          const dx = n[i + 2] - x, dy = n[i + 3] - y, L = Math.hypot(dx, dy), k = Math.floor(L / 4);
          for (let j = 1; j < k; j++) { const r = rnd() * amp; out.push(`${(x + dx * j / k - dy / L * r).toFixed(1)},${(y + dy * j / k + dx / L * r).toFixed(1)}`); }
        }
      }
      return out.join(' ');
    };
    const main = [
      [3, '545,82 575,79 598,76 612,56 627,38 625,46 640,51 650,56 652,64 640,72 636,86 645,88 655,82 662,70 672,62 678,76 682,84 690,88 700,82 720,80 744,84 740,98 738,106 752,108 760,116 776,120 782,128 792,122 800,112 818,110 832,108 850,116 870,120 878,128 894,130 910,125 930,128 950,136 966,136 980,128 996,119 1016,122 1030,128 1045,138 1058,142 1068,148 1076,146'],
      [0, '1076,146 1225,906 1248,908 1268,902'],
      [2, '1268,902 1285,893 1303,887 1303,910 1320,920 1352,942 1352,981 1325,972 1287,960 1292,940 1286,925 1280,938 1265,952 1240,950 1218,944 1216,930 1210,938'],
      [0, '1210,938 1185,938 1160,938 1140,944 1115,952'],
      [6, '1115,952 1100,950 1085,940 1068,934 1070,912 1060,930 1040,930 1028,926 1022,930 1026,915 1006,908 1018,897 998,885 1004,875 988,892 978,884 975,895 960,898 955,882 945,892 940,872 936,895 920,888 930,905 915,912 932,918 915,930 935,938 925,945 945,960 938,978 925,972 905,980 895,975 885,990 870,1000 858,1015 840,1025 830,1040 810,1045 795,1052 782,1045 785,1035 805,1030'],
      [1, '805,1030 812,1015 821,1000 805,1012 790,1010 784,1000 790,975 803,945 800,925 815,912 845,897 860,900 897,908 862,894 855,890 868,862 885,854 908,856 880,856 866,862 858,878 845,876'],
      [5, '845,876 832,870 815,882 795,895 785,910 772,925 763,932 768,945 748,950 735,960 752,962 752,975 735,990 720,1005 705,1020 690,1045 687,1058'],
      [1, '687,1058 700,1065 718,1068 724,1080 712,1098 700,1100'],
      [10, '700,1100 688,1120 680,1135 665,1148 645,1155 620,1180 585,1210 585,1225 560,1245 535,1255 510,1270 485,1300 475,1312 450,1325 435,1334 400,1325 375,1340 372,1352 350,1356 340,1342 332,1338 322,1356 308,1364 295,1370 270,1372 247,1375 250,1365'],
      [2, '250,1365 280,1350 295,1335 320,1312 345,1303 370,1302 376,1320 382,1308 392,1322 395,1305 410,1280 440,1262 475,1242 485,1225 510,1200 530,1185 540,1188 532,1170 535,1155 540,1132 556,1133 541,1128 542,1110 560,1090 580,1092 565,1084 572,1070 580,1052 568,1068 558,1080 515,1094 500,1072 500,1055'],
      [6, '500,1055 490,1065 482,1080 486,1108 475,1105 465,1085 450,1068 440,1075 425,1055 400,1070 370,1083 343,1077 366,1072 360,1045 355,1030 368,1008 360,980 352,950 363,912 345,935 343,958'],
      [2, '343,958 325,970 300,972 275,969 270,950 258,928 270,908 285,895 300,890 298,904 308,906 312,892 302,880 290,886 275,880 260,882'],
      [9, '260,882 250,870 258,860 235,850 232,830 222,820 228,808 215,805 222,790 240,792 238,772'],
      [2, '238,772 258,755 276,738 287,750 284,735 285,715 290,698 305,686 325,686 335,695 345,708 365,700 392,674 378,664 395,676 410,680 430,678 445,658 444,625 438,602 426,598 440,592 448,592 453,575 445,565 452,554 435,568 415,571 398,580 382,600 378,582 370,592 362,578 340,575 302,580 280,570 257,558 256,535 244,510 256,500 265,508 280,520 296,520 280,510 262,498 235,488 212,463 240,450 262,435 290,420 302,436 300,418 320,412 350,408 372,411 362,425 360,450 370,455 400,461 430,465 436,458 445,450 456,462 454,446 432,440 430,420 415,405 413,390 425,388 436,405 436,395 448,386'],
      [1, '448,386 430,383 400,378 380,369 378,345 374,328 358,308 340,288 324,272 316,255 300,250 312,248 320,232 325,211 340,216 390,216 408,202 422,188 426,168'],
      [4, '426,168 430,152 448,136 468,116 480,122 500,116 515,106 530,90 528,128 533,104 543,106 530,95 545,82'],
    ].map(([a, p]) => rough(p, a)).join(' ');
    const near = ['50,584 55,600 75,608 95,602 102,625 120,640 148,650 140,658 122,655 108,668 100,655 88,638 75,622 50,622 40,612 42,592', '185,446 187,448 186,449', '258,568 260,569 259,571', '429,625 431,626 430,627',
      '143,912 160,915 175,906 195,905 215,915 215,948 190,956 165,940 150,925', '!760,1100 750,1125 735,1135 725,1155 712,1170 704,1163 697,1180 675,1185 660,1208 670,1222 674,1240 690,1236 700,1243 692,1258 712,1240 740,1220 752,1205 772,1198 776,1180 765,1160 745,1165 750,1145 775,1135 790,1132 782,1120 768,1122 766,1104', '658,1285 670,1272 676,1274 664,1282', '680,1275 690,1270 697,1273 690,1278', '950,990 955,970 965,958 982,943 978,962 962,985', '995,935 1010,930 1005,942 996,944',
      '168,1400 178,1385 190,1370 205,1374 215,1366 242,1365 244,1388 225,1398 200,1398 184,1410 170,1408', '52,1435 62,1425 78,1430 78,1440 90,1436 94,1440 75,1450 60,1445', '!8,1470 45,1460 60,1450 85,1448 100,1446 85,1455 70,1466 45,1464 25,1475', '105,1422 113,1414 122,1420 116,1428', '127,1420 136,1412 135,1424', '140,1430 160,1432 157,1434', '266,1418 278,1420 289,1427 278,1426', '615,1330 619,1326 622,1332 618,1336', '712,1036 720,1034 718,1042', '766,1072 772,1070 774,1074', '778,1072 782,1073 779,1075', '564,1298 567,1304 566,1306', '388,1085 400,1072 404,1076 394,1090', '418,1076 424,1080 420,1084', '545,1268 556,1270 548,1272', '!370,1360 385,1356 380,1372 372,1374', '!398,1395 412,1376 418,1386 432,1372 438,1392 424,1390 410,1392', '414,1404 428,1406 427,1410', '296,1372 300,1380 292,1388', '318,1370 330,1376 320,1378', '250,1376 262,1372 256,1386', '266,1368 280,1360 286,1376 272,1382', '!505,1268 516,1264 520,1270 508,1276', '!480,1300 494,1286 500,1296 484,1310', '0,1450 10,1456 4,1468 -6,1466', '-72,822 -68,830 -66,822', '-64,832 -56,842 -50,849 -58,840'].map(p => `<polygon points="${p[0] === '!' ? rough(p.slice(1), 13) : rough(p, 4)}"/>`).join('');
    const west = ['95,105 110,106 122,118 133,134 118,128 105,128 106,118', '112,166 135,168 125,178 122,171', '150,152 161,162 158,161', '225,228 230,231 227,231', '270,294 290,290 300,284 295,298 276,297', '332,344 345,358 361,379 352,376 342,360', '380,334 392,334 396,340 388,345 380,341', '317,301 321,302 319,304', '332,314 339,317 334,319', '318,320 322,325 320,326', '456,380 461,382 458,384', '449,398 454,401 450,402', '425,416 432,413 428,418', '490,385 508,392 512,402 538,404 545,400 543,415 525,411 506,408 493,410', '545,430 555,410 565,407 572,422 600,424 600,428 565,432', '590,408 600,404 602,412', '602,416 614,424 606,422', '635,424 680,428 690,432 685,436 655,432', '686,420 697,410 708,418 704,430 692,430', '700,436 730,444 752,455 730,453', '772,445 785,438 790,445 778,449', '840,448 847,444 843,450', '866,444 882,438 880,446', '902,438 914,430 928,438 922,442', '928,420 934,422 930,428', '950,448 975,436 1005,404 1020,397 1032,408 1020,420 990,438 975,442', '1030,422 1055,416 1072,402 1120,392 1118,400 1092,412 1060,422 1035,426', '1072,385 1085,373 1100,380 1096,395 1080,396', '983,77 996,77 988,86', '999,133 1012,136 1006,141'].map(p => `<polygon points="${rough(p, 5)}"/>`).join('');
    return `<style>:host{display:block;flex:1;min-width:0;border:1px solid #b0b0b0;background:#fff;overflow:hidden}svg{display:block;width:100%;height:100%}</style>
    <svg role="img" aria-label="Mapa: alaska, airports"><g transform="translate(332 208) scale(.33333)" fill="#e15989" stroke="#282828" stroke-width="3" stroke-linejoin="round">
    <polygon points="${main}"/>${near}
    <path d="M458,424Q470,416 478,424L488,420Q490,440 478,441 460,442 456,432Z" fill="#fff"/><path d="M440,412Q446,422 456,426M456,446 458,460M650,66 664,62M436,150 470,114 478,118M782,128 800,114M734,960 752,962M945,895 940,925 955,930M960,900 975,898 985,910 970,918M925,930 945,938 942,948M1085,972 1096,952 1108,954M1310,922 1318,938 1300,928M1290,925 1306,950M700,1190 710,1212M712,1158 735,1190M735,1150 760,1146M672,1230 700,1236M40,612 60,598" fill="none"/>
    <path d="M930,870 945,895 965,888 980,905 1000,890M922,920 950,950M930,950 945,965M1000,930 1030,925 1060,932" fill="none" stroke-width="5" stroke-dasharray="5 4"/>
    <circle cx="591" cy="612" r="11" fill="#e8b02f" stroke="#40331a" stroke-width="3"/></g>
    <g transform="translate(-8 558) scale(.33333)" fill="#e15989" stroke="#282828" stroke-width="3">${west}</g></svg>`;
  }
});

/* ---------- Group Stats window ---------- */
def('field-row', class extends El {
  render() {
    return `<style>:host{display:flex;align-items:center;height:26px;line-height:18px;padding-left:4px;gap:7px}:host([sel]){background:#efefef}</style><q-icon name="${this.a('icon')}" size="22"></q-icon><slot></slot>`;
  }
});

def('result-table', class extends El {
  render() {
    return `<style>:host{display:block;flex:1;min-width:0;border:1px solid #b0b0b0;background:linear-gradient(#efefef 18px,transparent 18px),linear-gradient(90deg,#efefef 11px,#fff 11px)}
    table{border-collapse:separate;border-spacing:0;table-layout:fixed;width:81px}th,td{padding:0;box-sizing:border-box;font-weight:normal;border:solid #c4c4c4;border-width:0 1px 1px 0}
    thead th{height:19px;background:linear-gradient(#fff,#ececec);border-bottom-color:#a8a8a8}thead th:first-child,thead th:last-child{border-right:0}tbody th{border-right-color:#a8a8a8;background:linear-gradient(#fff,#ececec);line-height:12px}tbody tr{height:30px}
    td{background:#f5ebea}td.v{background:#fff;text-align:right;padding-right:4px}.s{display:flex;justify-content:center;align-items:center;gap:8px;padding-left:6px}small{font-size:inherit;color:#999}</style>
    <table><colgroup><col style="width:11px"><col style="width:35px"><col style="width:35px"></colgroup>
    <thead><tr><th></th><th><div class="s">1<q-caret></q-caret></div></th><th>2</th></tr></thead>
    <tbody><tr><th>1<br><small>-</small></th><td></td><td></td></tr><tr><th>2</th><td></td><td class="v">1</td></tr></tbody></table>`;
  }
});

def('control-panel', class extends El {
  render() {
    const F = [['pie', 'id'], ['doc', 'name'], ['doc', 'use'], ...'average count max median min stand.dev. sum unique variance'.split(' ').map(n => ['bars', n])];
    return `<style>${controls}:host{display:flex;flex-direction:column;width:298px;flex:none}
    .in{display:flex;flex-direction:column;padding:7px 8px 0 6px}.lab{height:20px}
    .combo{display:grid;align-items:center;margin-bottom:5px}.combo>*{grid-area:1/1}.combo select{appearance:none;width:100%;height:22px;padding:0 4px}.combo q-caret{justify-self:end;margin-right:6px;pointer-events:none}
    .list{display:flex;border:1px solid #b0b0b0;background:#fff;margin-bottom:6px}.rows{flex:1}scroll-bar{--len:57px;--edge:0;--thumb:#e4e4e4;--track:linear-gradient(90deg,#fff,#f4f4f4)}
    .grid{display:grid;grid-template-columns:1fr 1fr;gap:6px}.grid>*{min-width:0}.f{width:38px;height:20px}.h{height:19px;display:flex;align-items:center;gap:5px}.h input{margin-left:6px}
    .box{height:70px;border:1px solid #b0b0b0;background:#fff;resize:none;border-radius:0;padding:3px 4px;box-sizing:border-box}div.box{padding:0}
    .last{display:flex;align-items:center;gap:5px;margin:6px 0;height:21px}.last label{flex:1}.clear{width:80px;height:21px}.calc{height:21px}.c{align-self:center}</style>
    <dock-title style="padding:0 2px">Control panel</dock-title>
    <div class="in"><label class="lab" for="ly">Layers</label>
    <div class="combo"><select id="ly" class="btn"><option>airports</option></select><q-caret></q-caret></div>
    <div class="lab">Fields</div>
    <div class="list"><div class="rows">${F.map(([i, n]) => `<field-row icon="${i}" ${n === 'count' ? 'sel' : ''}>${n}</field-row>`).join('')}</div><scroll-bar></scroll-bar></div>
    <div class="grid"><button class="btn f">Filter</button><span class="c">Columns</span><textarea class="box" aria-label="Filter">"use" = 'Military'</textarea><div class="box"></div>
    <div class="h">Rows</div><div class="h">Value<input type="checkbox" id="nul"><label for="nul">use NULL values</label></div><div class="box"></div><div class="box"><field-row icon="bars">count</field-row><field-row icon="pie">elev</field-row></div></div>
    <div class="last"><input type="checkbox" id="only"><label for="only">Use only selected features</label><button class="btn clear">Clear</button></div>
    <button class="btn calc">Calculate</button></div>`;
  }
});

def('group-stats', class extends El {
  render() {
    return `<style>:host{display:flex;flex-direction:column;box-sizing:border-box;border:1px solid #aaa;border-radius:9px;background:#efefef;overflow:hidden;box-shadow:0 30px 60px rgba(0,0,0,.3),0 2px 22px rgba(0,0,0,.22)}
    header{display:flex;align-items:center;height:30px;padding-left:8px;background:linear-gradient(90deg,#f9f1e8,#f8f1ea 40%,#f3f3f3 70%)}header span{flex:1;padding-left:6px}header button{border:0;background:none;width:46px;padding:0;height:28px;display:grid;place-items:center}
    main{display:flex;flex:1;min-height:0;padding-left:8px}result-table{margin-top:9px}
    .split{width:18px;display:grid;place-items:center;box-sizing:border-box;padding-left:8px}.split i{width:1px;height:18px;background:repeating-linear-gradient(#999 0 1px,transparent 1px 3px)}
    footer{display:flex;align-items:center;justify-content:space-between;height:30px;padding:10px 0 0 5px;box-sizing:border-box;white-space:pre}footer svg{align-self:end}</style>
    <header><q-icon name="logo" size="16"></q-icon><span>Group Stats</span>
    <button aria-label="Minimize"><svg width="11" height="11"><path d="M0 5.500H10" stroke="#000"/></svg></button><button aria-label="Maximize"><svg width="11" height="11"><rect x=".5" y=".5" width="9" height="9" rx="1" fill="none" stroke="#000"/></svg></button><button aria-label="Close"><svg width="11" height="11"><path d="M.5.5 10.500 10.500M10.500.5.5 10.500" stroke="#000"/></svg></button></header>
    <menu-bar items="_Data|Feat_ures|W_indow|He_lp"></menu-bar>
    <main><result-table></result-table><div class="split"><i></i></div><control-panel></control-panel></main>
    <footer><span>Calculate... 100% |  generate view...100% |  done.</span><svg width="14" height="14"><path d="M3 12h1M6 12h1M9 12h1M12 12h1M6 9h1M9 9h1M12 9h1M9 6h1M12 6h1M12 3h1" stroke="#aaa"/></svg></footer>`;
  }
});

/* ---------- status bar ---------- */
def('spin-box', class extends El {
  render() {
    return `<style>${controls}:host{display:flex;width:84px;height:20px;box-sizing:border-box;border:1px solid #b0b0b0;border-radius:3px;background:#fff;overflow:hidden}
    input{border:0;flex:1;min-width:0;padding:0 4px;background:none}div{width:13px;display:flex;flex-direction:column;border-left:1px solid #b0b0b0;background:#f4f4f4}button{flex:1;display:grid;place-items:center;min-height:0}</style>
    <input aria-label="${this.a('label')}" value="${this.a('value')}"><div><button class="plain" aria-label="Zwiększ"><q-caret dir="up"></q-caret></button><button class="plain" aria-label="Zmniejsz"><q-caret></q-caret></button></div>`;
  }
});

def('status-bar', class extends El {
  render() {
    return `<style>${controls}:host{display:flex;align-items:center;height:28px;flex:none;padding:0 7px 0 4px;box-sizing:border-box;background:#efefef;white-space:nowrap}
    .find{display:flex;align-items:center;width:200px;height:22px;box-sizing:border-box;padding-left:8px;gap:7px}.find input{border:0;background:none;padding:0;flex:1;min-width:0}.find input::placeholder{color:#808080;opacity:1}
    .msg{flex:1;padding-left:8px}.coord{width:107px;height:22px;text-align:center;padding:0;margin:0 5px 0 4px}
    .combo{display:grid;align-items:center;width:81px;margin:0 11px 0 4px}.combo>*{grid-area:1/1}.combo select{appearance:none;width:100%;height:22px;padding:0 0 0 1px}.combo i{justify-self:end;width:19px;height:20px;margin-right:1px;border-left:1px solid #b0b0b0;background:linear-gradient(#fff,#eee);display:grid;place-items:center;pointer-events:none;box-sizing:border-box}
    .sk{margin-left:12px}.po{margin:0 4px 0 7px}.ob{margin:0 8px}.re{margin:0 14px 0 4px}spin-box+input{margin-left:7px}.crs{display:flex;align-items:center;gap:2px;margin-right:20px}</style>
    <div class="field find"><q-icon name="search" size="13"></q-icon><input aria-label="Szukaj" placeholder="Szukana fraza (Ctrl+K)"></div>
    <span class="msg">Włącza/wyłącza tryb edycji aktywnej warstwy</span>
    <label for="co">Współrzędne</label><input id="co" class="field coord" value="1784101 10657852"><q-icon name="mouse" size="16"></q-icon>
    <label class="sk" for="sc">Skala</label><div class="combo"><select id="sc" class="field"><option>131749760</option></select><i><q-caret></q-caret></i></div>
    <q-icon name="lock" size="14"></q-icon><span class="po">Powiększenie</span><spin-box label="Powiększenie" value="100%"></spin-box>
    <span class="ob">Obrót</span><spin-box label="Obrót" value="0,0 °"></spin-box><input type="checkbox" id="re" checked><label class="re" for="re">Renderuj</label>
    <button class="plain crs"><q-icon name="globe" size="15"></q-icon>EPSG:4326</button><button class="plain" aria-label="Komunikaty"><q-icon name="bubble" size="17"></q-icon></button>`;
  }
});

/* ---------- application ---------- */
def('qgis-app', class extends El {
  render() {
    return `<style>${controls}:host{display:flex;flex-direction:column;height:100vh}
    .menu{color:#9b9b9b}.body{display:flex;flex:1;min-height:0}aside{display:flex;flex-direction:column;flex:none}
    .left{width:201px}.hs{height:6px;flex:none;display:grid;place-items:center}.hs i{width:18px;height:1px;background:repeating-linear-gradient(90deg,#aaa 0 1px,transparent 1px 3px)}.vs{width:6px;flex:none}
    .right{width:451px}.gap{height:29px}.right input{height:23px;width:100%;padding:0 4px}.alg{flex:1;border:1px solid #b0b0b0;background:#fff}
    group-stats{position:absolute;top:135px;right:130px;width:801px;height:748px}</style>
    <title-bar></title-bar>
    <menu-bar class="menu" items="Pro_jekt|_Edycja|_Widok|W_arstwa|_Ustawienia|_Wtyczki|Wekt_or|_Raster|_Bazy danych|W _internecie|Siatka|Pro_cessing|_Pomoc"></menu-bar>
    <tool-bar items="# newfile open save layoutnew layoutmgr style # hand! pansel zin zout zfull zsel zlay z1- zprev znext- newmap new3d bmnew bm clock refresh # select+ selform+ desel+ selloc # info abacus gear! sigma table+ measure+ tip runact-+"></tool-bar>
    <tool-bar items="# dsm gpkgnew shpnew feathernew memnew vtnew gpsnew # pens- pen savee- pts- vert-+ attr- trash- cut- copy- paste- undo- redo- # abc diag | abpin abcred | lpin- leye- lmov- lrot- ledit- # metas # python # help # reload"></tool-bar>
    <div class="body"><aside class="left"><browser-panel></browser-panel><div class="hs"><i></i></div><layers-panel></layers-panel></aside><div class="vs"></div>
    <map-canvas></map-canvas><div class="vs"></div>
    <aside class="right"><dock-title>Algorytmy Processingu</dock-title><div class="gap"></div><input class="field" aria-label="Szukaj algorytmu"><div class="alg"></div></aside></div>
    <status-bar></status-bar><group-stats></group-stats>`;
  }
});
</script>
</body>
</html>
